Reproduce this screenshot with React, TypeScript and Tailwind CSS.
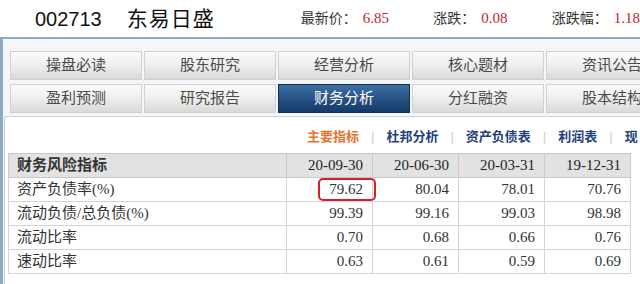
import React from "react";

const tabsTop = ["操盘必读", "股东研究", "经营分析", "核心题材", "资讯公告"];
const tabsBottom = ["盈利预测", "研究报告", "财务分析", "分红融资", "股本结构"];
const subNav = ["主要指标", "杜邦分析", "资产负债表", "利润表", "现"];
const dates = ["20-09-30", "20-06-30", "20-03-31", "19-12-31"];

const rows = [
  { name: "资产负债率(%)", values: ["79.62", "80.04", "78.01", "70.76"] },
  { name: "流动负债/总负债(%)", values: ["99.39", "99.16", "99.03", "98.98"] },
  { name: "流动比率", values: ["0.70", "0.68", "0.66", "0.76"] },
  { name: "速动比率", values: ["0.63", "0.61", "0.59", "0.69"] },
];

const serif = "font-['Liberation_Serif','Noto_Sans_CJK_SC',serif]";
const cjk = "font-['Liberation_Sans','Noto_Sans_CJK_SC',sans-serif]";

const Tab = ({ label, active }: { label: string; active: boolean }) => (
  <div
    className={
      active
        ? "w-[132px] h-[29px] shrink-0 flex items-center justify-center border border-[#0f2d55] bg-gradient-to-b from-[#3d6ea3] to-[#143a68] text-white text-[15px]"
        : "w-[132px] h-[29px] shrink-0 flex items-center justify-center border border-[#d0d0d0] bg-gradient-to-b from-[#fbfbfb] via-[#eeeeee] to-[#d9d9d9] text-[#4a4a4a] text-[15px]"
    }
  >
    {label}
  </div>
);

export default function App() {
  return (
    <div className={`w-[640px] h-[284px] overflow-hidden bg-white ${cjk}`}>
      {/* Stock header */}
      <div className="h-[37px] flex items-center whitespace-nowrap">
        <span className="ml-[35px] text-[20px] text-[#111]">002713</span>
        <span className="ml-[25px] text-[21px] text-[#111] tracking-[1px]">东易日盛</span>
        <div className="ml-[86px] w-[134px] text-[14px] text-[#333]">
          最新价：<span className={`${serif} text-[15px] text-[#c4262e] ml-[6px]`}>6.85</span>
        </div>
        <div className="w-[120px] text-[14px] text-[#333]">
          涨跌：<span className={`${serif} text-[15px] text-[#c4262e] ml-[6px]`}>0.08</span>
        </div>
        <div className="text-[14px] text-[#333]">
          涨跌幅：<span className={`${serif} text-[15px] text-[#c4262e] ml-[6px]`}>1.18</span>
        </div>
      </div>

      {/* Panel */}
      <div className="h-[247px] border-t-2 border-l-[3px] border-[#8fa8c4] bg-[#f4f6f8]">
        <div className="flex flex-col gap-[4px] pt-[12px] pl-[7px] pb-[3px]">
          <div className="flex gap-[2px]">
            {tabsTop.map((t) => (
              <Tab key={t} label={t} active={false} />
            ))}
          </div>
          <div className="flex gap-[2px]">
            {tabsBottom.map((t) => (
              <Tab key={t} label={t} active={t === "财务分析"} />
            ))}
          </div>
        </div>

        <div className="ml-[1px] h-[200px] bg-white border-t border-l border-[#c9d4df] pt-[9px] pl-[3px]">
          {/* Sub navigation */}
          <div className="flex items-center h-[22px] pl-[299px] text-[13px] font-bold whitespace-nowrap">
            {subNav.map((s, i) => (
              <React.Fragment key={s}>
                {i > 0 && <span className="mx-[12px] font-normal text-[#cccccc]">|</span>}
                <span className={i === 0 ? "text-[#e3742a]" : "text-[#23407a]"}>{s}</span>
              </React.Fragment>
            ))}
          </div>

          {/* Table */}
          <table className={`mt-[5px] border-collapse ${serif} text-[15px] text-[#333]`}>
            <thead>
              <tr className="h-[24px] bg-[#e2e2e2]">
                <th className="w-[278px] border border-[#c8c8c8] text-left pl-[8px] font-bold text-[#333]">
                  财务风险指标
                </th>
                {dates.map((d) => (
                  <th key={d} className="w-[86px] border border-[#c8c8c8] text-right pr-[9px] font-normal text-[#222]">
                    {d}
                  </th>
                ))}
              </tr>
            </thead>
            <tbody>
              {rows.map((r, ri) => (
                <tr key={r.name} className="h-[24px]">
                  <td className="border border-[#d4d4d4] pl-[8px]">{r.name}</td>
                  {r.values.map((v, vi) => (
                    <td key={vi} className="relative border border-[#d4d4d4] text-right pr-[9px]">
                      {ri === 0 && vi === 0 && (
                        <span className="absolute left-[31px] right-[-4px] top-0 bottom-[0px] border-2 border-[#d9202a] rounded-[5px]" />
                      )}
                      {v}
                    </td>
                  ))}
                </tr>
              ))}
            </tbody>
          </table>
        </div>
      </div>
    </div>
  );
}
